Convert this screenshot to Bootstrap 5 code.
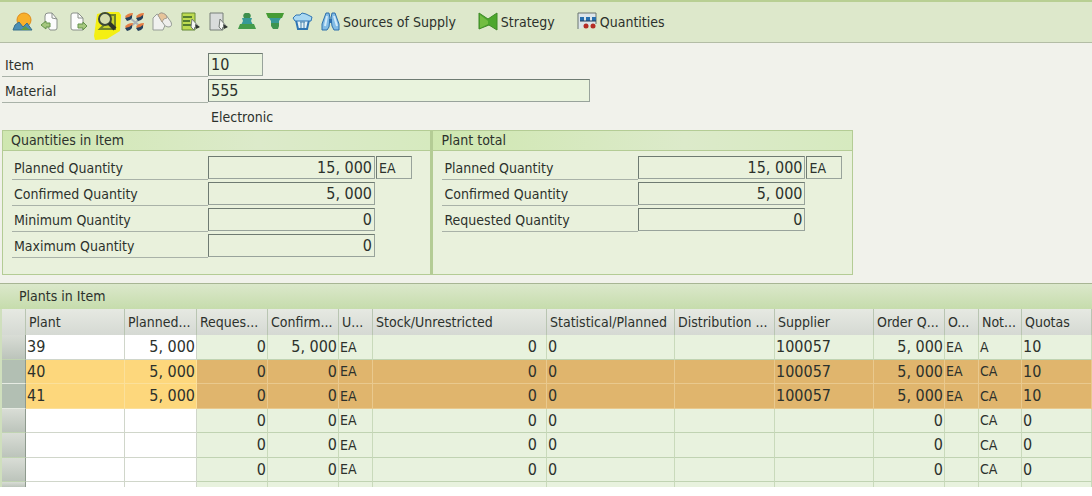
<!DOCTYPE html>
<html lang="en">
<head>
<meta charset="utf-8">
<meta name="viewport" content="width=device-width, initial-scale=1">
<title>Plants in Item</title>
<link href="https://cdn.jsdelivr.net/npm/bootstrap@5.3.0/dist/css/bootstrap.min.css" rel="stylesheet">
<style>
  body { background: #f1f2eb; color: #2c312c; font: 14px/20px "DejaVu Sans Condensed", "DejaVu Sans", sans-serif; }
  .toolbar { height: 43px; background: #dde8cb; border-top: 4px solid #b8cf93; border-top-width: 2px; border-bottom: 1px solid #b3bda5; padding: 0 13px; gap: 8px; }
  .tool { height: 28px; min-width: 20px; color: inherit; font-size: 14px; line-height: 20px; white-space: nowrap; }
  .tool svg { display: block; overflow: visible; flex: none; }
  .captioned { gap: 3px; }
  .wide-gap { margin-left: 14px; }
  .fields { padding: 10px 2px 0; }
  .field { height: 24px; margin-bottom: 2px; }
  .field label { border-bottom: 1px solid #a9b2a8; flex: none; height: 24px; padding-top: 2px; }
  .fields label { width: 206px; padding-left: 3px; }
  .material-name { display: block; padding-left: 209px; line-height: 25px; }
  .group label { width: 196px; padding-left: 2px; }
  .box { height: 23px; padding: 0 2px; border: 1px solid #98a39b; border-top-color: #6f7b72; border-left-color: #6f7b72; border-radius: 0; background: #e9f3dd; color: #2c312c; font-size: 16px; line-height: 20px; min-width: 0; outline: 0; }
  .qty { width: 167px; background: #e9f1dc; text-align: right; }
  .unit { width: 36px; font-size: 14px; margin-left: 1px; background: #e9f1dc; }
  .item-box { width: 55px; }
  .material-box { width: 382px; }
  .groups { max-width: 851px; margin: 0 0 8px 2px; }
  .group { flex: 430 1 0; border: 1px solid #b4cc95; background: #e9f1dc; min-height: 145px; }
  .group + .group { flex-grow: 421; border-left-width: 2px; }
  .group h2, .grid-title { font-size: 14px; line-height: 19px; margin: 0; font-weight: 400; }
  .group h2 { height: 20px; padding-left: 8px; background: linear-gradient(90deg, #cfe7b0, #dceaca 60%, #d6eabf); border-bottom: 1px solid #b4cc95; }
  .group-body { padding: 5px 9px 0; }
  .grid-title { height: 26px; line-height: 25px; padding-left: 19px; background: linear-gradient(#dbe8cb, #c6dcac); border-top: 1px solid #a8b594; }
  .grid-wrap { background: #fff; min-height: 187px; }
  .plants { table-layout: fixed; width: 100%; border-collapse: separate; border-spacing: 0; border-left: 2px solid #cfdfbd; }
  .plants th { height: 26px; padding: 0 0 0 3px; font-weight: 400; line-height: 24px; background: linear-gradient(#e6e9e2, #d5d9d3); border-right: 1px solid #b9c5b2; white-space: nowrap; overflow: hidden; }
  .plants td { height: 24px; padding: 0 1px; font-size: 16px; line-height: 23px; background: #e8f2de; border-right: 1px solid #c9dabb; border-bottom: 1px solid #c0d3b2; white-space: nowrap; }
  .plants tbody tr:nth-child(odd) td { height: 25px; line-height: 24px; }
  .plants td.edit { background: #fff; border-color: #d0d6ca; }
  .plants td.num { text-align: right; }
  .plants td.stock { padding-right: 9px; }
  .plants td.code { font-size: 14px; }
  .plants td.sel { background: linear-gradient(#d9ddd6, #bcc4bb); border-right: 1px solid #8e9a8e; }
  .plants tr.picked td { background: #e0b56d; border-color: #e9c98e; }
  .plants tr.picked td.edit { background: #fdd77c; border-color: #fbe09a; }
  .plants tr.picked td.sel { background: #b2bfb3; border-color: #8e9a8e; border-bottom-color: #e6ebe3; }
  .plants tbody tr.stub td { height: 5px; line-height: 4px; border-bottom: 0; }
</style>
<script src="https://cdn.jsdelivr.net/npm/bootstrap@5.3.0/dist/js/bootstrap.bundle.min.js"></script>
</head>
<body>
<nav class="toolbar d-flex align-items-center" aria-label="Item functions">
  <button type="button" class="tool btn p-0 border-0 rounded-0 d-flex align-items-center" aria-label="Overview">
    <svg width="20" height="20" viewBox="0 0 20 20"><circle cx="11" cy="8" r="7" fill="#f8b02b" stroke="#de8b1b"/><path d="M0 18l2-5 4-3 4 5 4-4 5 7z" fill="#4b8fb5" stroke="#39708c"/><path d="M8 18l4-4 5 4z" fill="#5f9b47"/></svg></button>
  <button type="button" class="tool btn p-0 border-0 rounded-0 d-flex align-items-center" aria-label="Previous item">
    <svg width="20" height="20" viewBox="0 0 20 20"><path d="M4 4q0-3 3-3h4l5 6v9q0 2-2 2H9L4 11z" fill="#fcfcfc" stroke="#8a908a"/><path d="M11 1v5l5 1" fill="none" stroke="#8a908a"/><path d="M0 13l5-4v2h4v4H5v2z" fill="#a5c77e" stroke="#64934a"/></svg></button>
  <button type="button" class="tool btn p-0 border-0 rounded-0 d-flex align-items-center" aria-label="Next item">
    <svg width="20" height="20" viewBox="0 0 20 20"><path d="M4 1h5l5 5v12H4q-2 0-2-2V3q0-2 2-2z" fill="#fcfcfc" stroke="#8a908a"/><path d="M9 1v5h5" fill="none" stroke="#8a908a"/><path d="M18 14l-4-4v2H9v4h5v2z" fill="#a5c77e" stroke="#64934a"/></svg></button>
  <button type="button" class="tool btn p-0 border-0 rounded-0 d-flex align-items-center" aria-label="Details">
    <svg width="20" height="20" viewBox="0 0 20 20"><path d="M0 2L9 0h13l2 3-1 16-13 8-12 1-1-4z" fill="#f4ef12"/><path d="M8 3h10v14H3l5-5z" fill="#c8d22a" stroke="#718527" stroke-width="2"/><circle cx="8" cy="7" r="6" fill="#d5dcae" stroke="#3e4a38" stroke-width="2"/><path d="M12 11l6 6" stroke="#2e352a" stroke-width="4"/></svg></button>
  <button type="button" class="tool btn p-0 border-0 rounded-0 d-flex align-items-center" aria-label="Distribute">
    <svg width="20" height="20" viewBox="0 0 20 20"><path d="M5 6l11 9M16 6L5 15" stroke="#aab2b5" stroke-width="2"/><g id="node"><path d="M0 5q2-4 8-4L7 5q-3 2-6 1z" fill="#e57d43"/><path d="M0 6q4 0 7-3v3q-2 3-5 3z" fill="#26415c"/></g><use href="#node" x="11"/><use href="#node" y="10"/><use href="#node" x="11" y="10"/></svg></button>
  <button type="button" class="tool btn p-0 border-0 rounded-0 d-flex align-items-center" aria-label="Delete entry">
    <svg width="20" height="20" viewBox="0 0 20 20"><path d="M0 6l4-4 5 3 4 6-3 7H0z" fill="#f0f1ef" stroke="#979d97"/><path d="M5 3q3-4 8 0l5 7q2 5-3 5-3 0-5-4z" fill="#eeeeeb" stroke="#979d97"/><path d="M5 3q3-4 8 0l1 3q-4 0-5 4z" fill="#e6c49a" stroke="#aaa08f"/></svg></button>
  <button type="button" class="tool btn p-0 border-0 rounded-0 d-flex align-items-center" aria-label="Select all">
    <svg width="20" height="20" viewBox="0 0 20 20"><path d="M1 1h13v17H1z" fill="#bedb51" stroke="#648836"/><path d="M2 5h9M2 9h7M2 13h9" stroke="#557d31" stroke-width="2"/><path d="M11 7l7 8h-4l-1 3-3-3z" fill="#f5f6f3" stroke="#737a75"/><path d="M14 12l5 3-4 2z" fill="#303632"/></svg></button>
  <button type="button" class="tool btn p-0 border-0 rounded-0 d-flex align-items-center" aria-label="Deselect all">
    <svg width="20" height="20" viewBox="0 0 20 20"><path d="M1 1h13v17H1z" fill="#d9dcdb" stroke="#777e79"/><path d="M11 7l7 8h-4l-1 3-3-3z" fill="#f5f6f3" stroke="#737a75"/><path d="M14 12l5 3-4 2z" fill="#303632"/></svg></button>
  <button type="button" class="tool btn p-0 border-0 rounded-0 d-flex align-items-center" aria-label="Sort ascending">
    <svg width="20" height="20" viewBox="0 0 20 20"><path d="M8 1h4q3 2 1 5H7Q5 3 8 1z" fill="#3d8f4c"/><path d="M5 6h10l-1 3 2 4H4l2-4z" fill="#379997"/><path d="M3 12h14l2 5H1z" fill="#459b4a"/></svg></button>
  <button type="button" class="tool btn p-0 border-0 rounded-0 d-flex align-items-center" aria-label="Sort descending">
    <svg width="20" height="20" viewBox="0 0 20 20"><path d="M1 1h18l-2 5H3z" fill="#459b34"/><path d="M4 6h12l-2 3v3H6V9z" fill="#379997"/><path d="M6 11h8v3l-1 3H8l-2-3z" fill="#3d944f"/></svg></button>
  <button type="button" class="tool btn p-0 border-0 rounded-0 d-flex align-items-center" aria-label="Remove">
    <svg width="20" height="20" viewBox="0 0 20 20"><path d="M3 8h13l-2 9H5z" fill="#e4f1f6" stroke="#2f75b3" stroke-width="2"/><path d="M0 6l3-3h4l2-2 4 1 2 1 4 2-1 4H2z" fill="#a9d8f2" stroke="#2f75b3"/><path d="M8 10v6m3-6v6M7 10h5" stroke="#4985af"/></svg></button>
  <button type="button" class="tool captioned btn p-0 border-0 rounded-0 d-flex align-items-center">
    <svg width="19" height="20" viewBox="0 0 19 20"><path d="M5 1h3l1 5-1 9-2 3H1v-6zM11 1h3l4 11v6h-5l-2-4-1-8z" fill="#82bce5" stroke="#2e70ac"/><path d="M8 7h3v4H8z" fill="#2e70ac"/><path d="M6 4L4 14M13 4l3 10" stroke="#d0eafa" stroke-width="2"/></svg>
    <span>Sources of Supply</span></button>
  <button type="button" class="tool captioned wide-gap btn p-0 border-0 rounded-0 d-flex align-items-center">
    <svg width="20" height="20" viewBox="0 0 20 20"><path d="M1 1l9 6 9-6v17l-8-5-10 4z" fill="#4da72d" stroke="#3f8a27"/><path d="M2 3l8 6v3l-8 4z" fill="#73bd42"/></svg>
    <span>Strategy</span></button>
  <button type="button" class="tool captioned wide-gap btn p-0 border-0 rounded-0 d-flex align-items-center">
    <svg width="20" height="20" viewBox="0 0 20 20"><path d="M1 17V1h18v11" fill="#dce5ea" stroke="#68756e"/><path d="M3 5h4v4H3zM9 5h4v4H9zM15 5h4v4h-4z" fill="#286fae"/><path d="M3 9h16" stroke="#223d58"/><circle cx="9" cy="14" r="2.500" fill="#b52c25"/><circle cx="16" cy="14" r="2.500" fill="#b52c25"/></svg>
    <span>Quantities</span></button>
</nav>

<main>
  <section class="fields">
    <div class="field d-flex"><label for="item">Item</label><input id="item" class="box item-box" value="10" readonly></div>
    <div class="field d-flex"><label for="material">Material</label><input id="material" class="box material-box" value="555" readonly></div>
    <output for="material" class="material-name">Electronic</output>
  </section>

  <div class="groups d-flex">
    <section class="group">
      <h2>Quantities in Item</h2>
      <div class="group-body">
        <div class="field d-flex"><label for="q1">Planned Quantity</label><input id="q1" class="box qty" value="15, 000" readonly><input class="box unit" aria-label="Unit" value="EA" readonly></div>
        <div class="field d-flex"><label for="q2">Confirmed Quantity</label><input id="q2" class="box qty" value="5, 000" readonly></div>
        <div class="field d-flex"><label for="q3">Minimum Quantity</label><input id="q3" class="box qty" value="0" readonly></div>
        <div class="field d-flex"><label for="q4">Maximum Quantity</label><input id="q4" class="box qty" value="0" readonly></div>
      </div>
    </section>
    <section class="group">
      <h2>Plant total</h2>
      <div class="group-body">
        <div class="field d-flex"><label for="t1">Planned Quantity</label><input id="t1" class="box qty" value="15, 000" readonly><input class="box unit" aria-label="Unit" value="EA" readonly></div>
        <div class="field d-flex"><label for="t2">Confirmed Quantity</label><input id="t2" class="box qty" value="5, 000" readonly></div>
        <div class="field d-flex"><label for="t3">Requested Quantity</label><input id="t3" class="box qty" value="0" readonly></div>
      </div>
    </section>
  </div>

  <h2 class="grid-title" id="plants-title">Plants in Item</h2>
  <div class="grid-wrap">
    <table class="plants" aria-labelledby="plants-title">
      <colgroup><col style="width:24px"><col style="width:99px"><col style="width:72px"><col style="width:71px"><col style="width:71px"><col style="width:34px"><col style="width:174px"><col style="width:128px"><col style="width:100px"><col style="width:99px"><col style="width:71px"><col style="width:34px"><col style="width:43px"><col></colgroup>
      <thead><tr><th></th><th>Plant</th><th>Planned...</th><th>Reques...</th><th>Confirm...</th><th>U...</th><th>Stock/Unrestricted</th><th>Statistical/Planned</th><th>Distribution ...</th><th>Supplier</th><th>Order Q...</th><th>O...</th><th>Not...</th><th>Quotas</th></tr></thead>
      <tbody>
        <tr><td class="sel"></td><td class="edit">39</td><td class="edit num">5, 000</td><td class="num">0</td><td class="num">5, 000</td><td class="code">EA</td><td class="num stock">0</td><td>0</td><td></td><td>100057</td><td class="num">5, 000</td><td class="code">EA</td><td class="code">A</td><td>10</td></tr>
        <tr class="picked"><td class="sel"></td><td class="edit">40</td><td class="edit num">5, 000</td><td class="num">0</td><td class="num">0</td><td class="code">EA</td><td class="num stock">0</td><td>0</td><td></td><td>100057</td><td class="num">5, 000</td><td class="code">EA</td><td class="code">CA</td><td>10</td></tr>
        <tr class="picked"><td class="sel"></td><td class="edit">41</td><td class="edit num">5, 000</td><td class="num">0</td><td class="num">0</td><td class="code">EA</td><td class="num stock">0</td><td>0</td><td></td><td>100057</td><td class="num">5, 000</td><td class="code">EA</td><td class="code">CA</td><td>10</td></tr>
        <tr><td class="sel"></td><td class="edit"></td><td class="edit"></td><td class="num">0</td><td class="num">0</td><td class="code">EA</td><td class="num stock">0</td><td>0</td><td></td><td></td><td class="num">0</td><td></td><td class="code">CA</td><td>0</td></tr>
        <tr><td class="sel"></td><td class="edit"></td><td class="edit"></td><td class="num">0</td><td class="num">0</td><td class="code">EA</td><td class="num stock">0</td><td>0</td><td></td><td></td><td class="num">0</td><td></td><td class="code">CA</td><td>0</td></tr>
        <tr><td class="sel"></td><td class="edit"></td><td class="edit"></td><td class="num">0</td><td class="num">0</td><td class="code">EA</td><td class="num stock">0</td><td>0</td><td></td><td></td><td class="num">0</td><td></td><td class="code">CA</td><td>0</td></tr>
        <tr class="stub"><td class="sel"></td><td class="edit"></td><td class="edit"></td><td></td><td></td><td></td><td></td><td></td><td></td><td></td><td></td><td></td><td></td><td></td></tr>
      </tbody>
    </table>
  </div>
</main>
</body>
</html>
